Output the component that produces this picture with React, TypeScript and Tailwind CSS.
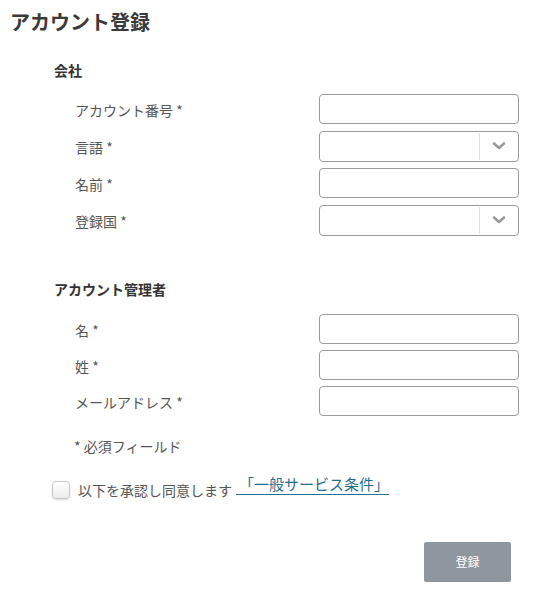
import { useState } from 'react'

const font = { fontFamily: '"Noto Sans CJK JP", "Noto Sans", sans-serif' }

function TextField() {
  return (
    <input
      type="text"
      className="h-[30px] w-[200px] rounded-[4px] border border-[#9a9a9a] bg-white px-2 text-[14px] outline-none"
    />
  )
}

function SelectField() {
  return (
    <div className="flex h-[31px] w-[200px] items-stretch rounded-[4px] border border-[#9a9a9a] bg-white">
      <div className="flex-1" />
      <div className="my-[1px] w-px bg-[#e2e2e2]" />
      <div className="flex w-[38px] items-center justify-center">
        <svg width="14" height="10" viewBox="0 0 14 10">
          <path d="M2 2.5 L7 7 L12 2.5" fill="none" stroke="#9a9a9a" strokeWidth="2.6" strokeLinecap="round" strokeLinejoin="round" />
        </svg>
      </div>
    </div>
  )
}

function Row({ label, select }: { label: string; select?: boolean }) {
  return (
    <div className="flex h-[30px] items-center">
      <span className="w-[319px] pl-[75px] pt-[2px] text-[14px] leading-5 text-[#555]">{label}</span>
      {select ? <SelectField /> : <TextField />}
    </div>
  )
}

export default function App() {
  const [agreed, setAgreed] = useState(false)

  return (
    <div className="flex min-h-[607px] w-[543px] flex-col bg-white" style={font}>
      <h1 className="pl-[10px] pt-[8px] text-[20px] font-bold leading-[28px] text-[#3a3a3a]">アカウント登録</h1>

      <h2 className="mt-[24px] pl-[54px] text-[14px] font-bold leading-5 text-[#333]">会社</h2>
      <div className="mt-[14px] flex flex-col gap-[7px]">
        <Row label="アカウント番号 *" />
        <Row label="言語 *" select />
        <Row label="名前 *" />
        <Row label="登録国 *" select />
      </div>

      <h2 className="mt-[44px] pl-[54px] text-[14px] font-bold leading-5 text-[#333]">アカウント管理者</h2>
      <div className="mt-[15px] flex flex-col gap-[6px]">
        <Row label="名 *" />
        <Row label="姓 *" />
        <Row label="メールアドレス *" />
      </div>

      <p className="mt-[20px] pl-[74px] text-[14px] leading-5 text-[#555]">* 必須フィールド</p>

      <div className="mt-[23px] flex items-center pl-[52px]">
        <button
          type="button"
          onClick={() => setAgreed(!agreed)}
          className="h-[18px] w-[18px] rounded-[4px] border border-[#c8c8c8] bg-gradient-to-b from-white to-[#ececec] shadow-[0_1px_2px_rgba(0,0,0,0.15)]"
        >
          {agreed && <span className="block text-[12px] leading-[16px] text-[#555]">✓</span>}
        </button>
        <span className="ml-[8px] text-[14px] leading-5 text-[#555]">以下を承認し同意します</span>
        <a href="#" className="ml-[4px] -translate-y-[5px] border-b border-[#1f6f8f] pl-[3px] text-[15px] leading-5 text-[#1f6f8f]">
          「一般サービス条件」
        </a>
      </div>

      <div className="mt-[42px] flex justify-end pr-[32px]">
        <button type="button" className="h-[40px] w-[87px] rounded-[2px] bg-[#8e969f] text-[12px] text-white">
          登録
        </button>
      </div>
    </div>
  )
}
